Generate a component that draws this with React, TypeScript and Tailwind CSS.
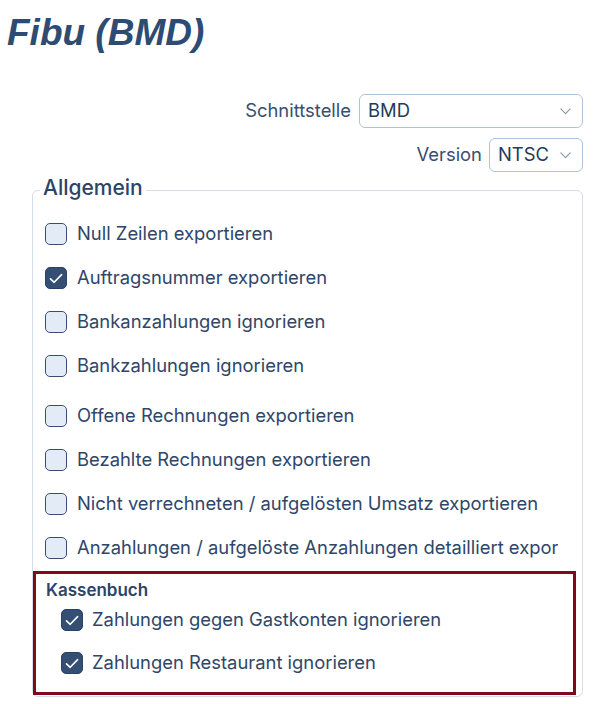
import React from "react";

const TEXT = "text-[#2f4669]";

function Chevron() {
  return (
    <svg width="11" height="7" viewBox="0 0 11 7" fill="none" className="shrink-0">
      <path d="M0.8 0.8 L5.5 5.6 L10.2 0.8" stroke="#8c96a6" strokeWidth="1.1" strokeLinecap="round" strokeLinejoin="round" />
    </svg>
  );
}

function Checkbox({ checked }: { checked: boolean }) {
  return (
    <span
      className={
        checked
          ? "w-[22px] h-[22px] rounded-[5px] border-[1.5px] border-[#2c4265] bg-[#354e74] flex items-center justify-center shrink-0"
          : "w-[22px] h-[22px] rounded-[5px] border-[1.5px] border-[#3a4f70] bg-[#e3ebf6] shrink-0"
      }
    >
      {checked && (
        <svg width="14" height="11" viewBox="0 0 14 11" fill="none">
          <path d="M1.5 5.8 L5.2 9.3 L12.6 1.6" stroke="#ffffff" strokeWidth="1.6" strokeLinecap="round" strokeLinejoin="round" />
        </svg>
      )}
    </span>
  );
}

function Row({ label, checked = false }: { label: string; checked?: boolean }) {
  return (
    <div className="h-[44px] flex items-center gap-[10px] pl-[12px]">
      <Checkbox checked={checked} />
      <span className={`text-[18.4px] ${TEXT} whitespace-nowrap overflow-hidden max-w-[481px]`}>{label}</span>
    </div>
  );
}

export default function App() {
  return (
    <div
      className="w-[600px] h-[704px] bg-white overflow-hidden"
      style={{ fontFamily: "Inter, 'Noto Sans', sans-serif" }}
    >
      <h1
        className="pt-[11px] pl-[7px] text-[37px] leading-[44px] font-bold italic text-[#2d4b73]"
        style={{ fontFamily: "'Liberation Sans', Arial, sans-serif" }}
      >
        Fibu (BMD)
      </h1>

      <div className="mt-[39px] pr-[17px] flex flex-col items-end gap-[10px]">
        <div className="flex items-center gap-[8px]">
          <span className="text-[18.4px] text-[#3a4e6d]">Schnittstelle</span>
          <div className="w-[224px] h-[34px] rounded-[6px] border border-[#aec2de] flex items-center justify-between pl-[8px] pr-[11px]">
            <span className="text-[18.4px] text-[#243a5a]">BMD</span>
            <Chevron />
          </div>
        </div>
        <div className="flex items-center gap-[7px]">
          <span className="text-[18.4px] text-[#3a4e6d]">Version</span>
          <div className="w-[94px] h-[34px] rounded-[6px] border border-[#aec2de] flex items-center justify-between pl-[8px] pr-[11px]">
            <span className="text-[18.4px] text-[#243a5a]">NTSC</span>
            <Chevron />
          </div>
        </div>
      </div>

      <fieldset className="mt-[4px] ml-[32px] w-[551px] border border-[#d3dde9] rounded-[6px] pb-[1px]">
        <legend className="ml-[7px] px-[3px] pb-[4px] text-[21px] leading-[24px] font-medium text-[#2c4468]">
          Allgemein
        </legend>
        <div className="pt-[8px]">
          <Row label="Null Zeilen exportieren" />
          <Row label="Auftragsnummer exportieren" checked />
          <Row label="Bankanzahlungen ignorieren" />
          <Row label="Bankzahlungen ignorieren" />
          <div className="h-[6px]" />
          <Row label="Offene Rechnungen exportieren" />
          <Row label="Bezahlte Rechnungen exportieren" />
          <Row label="Nicht verrechneten / aufgelösten Umsatz exportieren" />
          <Row label="Anzahlungen / aufgelöste Anzahlungen detailliert exportieren" />
        </div>
        <div className="mt-[1px] w-[543px] border-[3px] border-[#7e0a1c] pt-[6px] pb-[9px] pl-[10px]">
          <div className="text-[17px] leading-[20px] font-semibold text-[#2c4468]">Kassenbuch</div>
          <div className="flex flex-col gap-[3px] pl-[15px]">
            <div className="h-[40px] flex items-center gap-[9px]">
              <Checkbox checked />
              <span className={`text-[18.4px] ${TEXT}`}>Zahlungen gegen Gastkonten ignorieren</span>
            </div>
            <div className="h-[40px] flex items-center gap-[9px]">
              <Checkbox checked />
              <span className={`text-[18.4px] ${TEXT}`}>Zahlungen Restaurant ignorieren</span>
            </div>
          </div>
        </div>
      </fieldset>
    </div>
  );
}
